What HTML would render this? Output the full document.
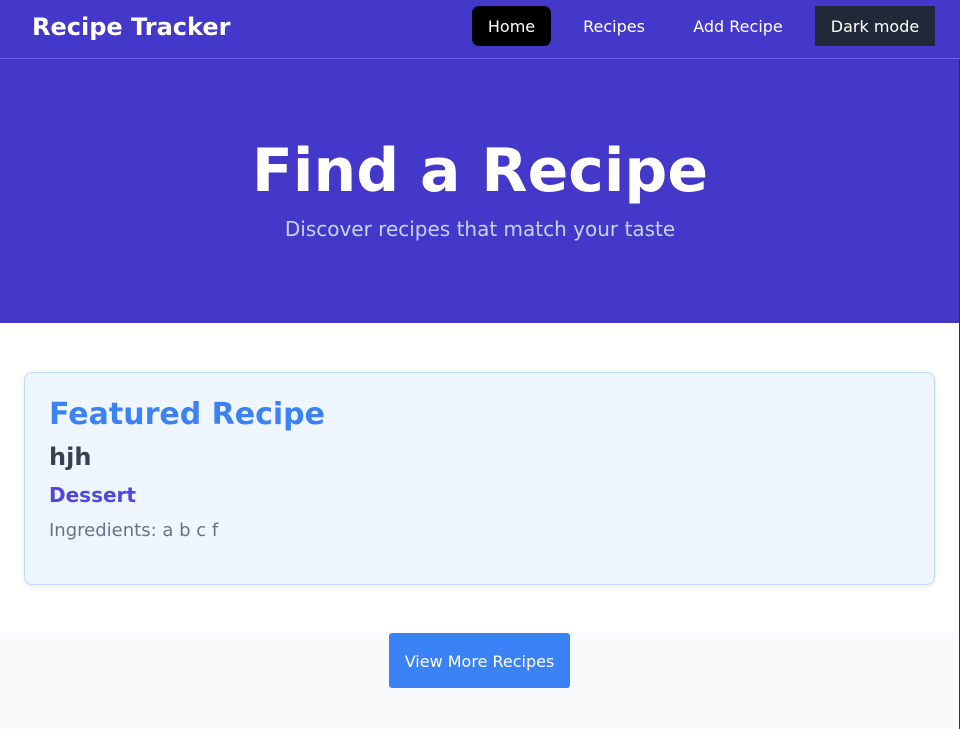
<!DOCTYPE html>
<html><head><style>
*{margin:0;padding:0;box-sizing:border-box}
body{width:960px;height:729px;overflow:hidden;font-family:"DejaVu Sans",sans-serif;background:#fff;position:relative}
nav{height:59px;background:#4338ca;border-bottom:1px solid #6366f1;position:relative}
.logo{position:absolute;left:32px;top:12px;color:#fff;font-weight:bold;font-size:24px;line-height:30px}
.nl{position:absolute;top:6px;height:40px;line-height:41px;color:#fff;font-size:16px;text-align:center}
.hero{background:#4338ca;height:264px;text-align:center;color:#fff}
.hero h1{font-size:60px;font-weight:bold;padding-top:74px;line-height:76px}
.hero p{font-size:20px;color:#c7d2fe;margin-top:7px;line-height:26px}
.card{position:absolute;left:24px;top:372px;width:911px;height:213px;background:#eff6ff;border:1px solid #bfdbfe;border-radius:8px;box-shadow:0 2px 5px rgba(0,0,0,.08)}
.gray{position:absolute;left:0;top:633px;width:960px;height:96px;background:#f9fafb}
.btn{position:absolute;left:389px;top:633px;width:181px;height:55px;background:#3b82f6;color:#fff;font-size:16px;line-height:57px;text-align:center;border-radius:3px}
.t{position:absolute;left:24px;white-space:nowrap}
</style></head><body>
<nav>
<div class="logo">Recipe Tracker</div>
<div class="nl" style="left:472px;width:79px;background:#000;border-radius:7px">Home</div>
<div class="nl" style="left:570px;width:88px">Recipes</div>
<div class="nl" style="left:680px;width:116px">Add Recipe</div>
<div class="nl" style="left:815px;width:120px;background:#1f2937">Dark mode</div>
</nav>
<div class="hero"><h1>Find a Recipe</h1><p>Discover recipes that match your taste</p></div>
<div class="card">
<div class="t" style="top:24px;font-size:30px;font-weight:bold;color:#3b82f6">Featured Recipe</div>
<div class="t" style="top:70px;font-size:24px;font-weight:bold;color:#374151">hjh</div>
<div class="t" style="top:110px;font-size:20px;font-weight:bold;color:#4f46e5">Dessert</div>
<div class="t" style="top:147px;font-size:18px;color:#6b7280">Ingredients: a b c f</div>
</div>
<div class="gray"></div>
<div class="btn">View More Recipes</div>
<div style="position:absolute;right:0;top:59px;width:1px;height:670px;background:#333"></div>
</body></html>
